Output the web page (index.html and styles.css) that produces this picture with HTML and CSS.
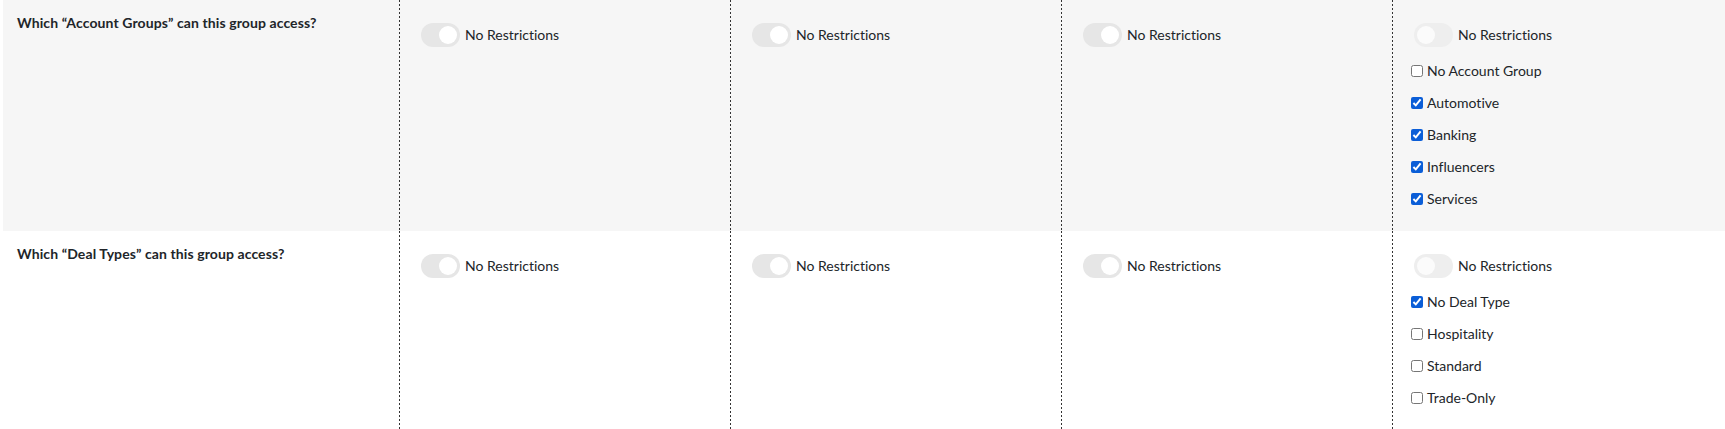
FILE: index.html
```html
<!DOCTYPE html>
<html>
<head>
<meta charset="utf-8">
<link rel="stylesheet" href="styles.css">
</head>
<body>
<div class="table">
  <div class="row shaded">
    <div class="label">Which “Account Groups” can this group access?</div>
    <div class="cell">
      <div class="toggle-line"><span class="switch on"><span class="knob"></span></span><span class="toggle-text">No Restrictions</span></div>
    </div>
    <div class="cell">
      <div class="toggle-line"><span class="switch on"><span class="knob"></span></span><span class="toggle-text">No Restrictions</span></div>
    </div>
    <div class="cell">
      <div class="toggle-line"><span class="switch on"><span class="knob"></span></span><span class="toggle-text">No Restrictions</span></div>
    </div>
    <div class="cell">
      <div class="toggle-line"><span class="switch off"><span class="knob"></span></span><span class="toggle-text">No Restrictions</span></div>
      <ul class="options">
        <li><label><input type="checkbox"> No Account Group</label></li>
        <li><label><input type="checkbox" checked> Automotive</label></li>
        <li><label><input type="checkbox" checked> Banking</label></li>
        <li><label><input type="checkbox" checked> Influencers</label></li>
        <li><label><input type="checkbox" checked> Services</label></li>
      </ul>
    </div>
  </div>
  <div class="row">
    <div class="label">Which “Deal Types” can this group access?</div>
    <div class="cell">
      <div class="toggle-line"><span class="switch on"><span class="knob"></span></span><span class="toggle-text">No Restrictions</span></div>
    </div>
    <div class="cell">
      <div class="toggle-line"><span class="switch on"><span class="knob"></span></span><span class="toggle-text">No Restrictions</span></div>
    </div>
    <div class="cell">
      <div class="toggle-line"><span class="switch on"><span class="knob"></span></span><span class="toggle-text">No Restrictions</span></div>
    </div>
    <div class="cell">
      <div class="toggle-line"><span class="switch off"><span class="knob"></span></span><span class="toggle-text">No Restrictions</span></div>
      <ul class="options">
        <li><label><input type="checkbox" checked> No Deal Type</label></li>
        <li><label><input type="checkbox"> Hospitality</label></li>
        <li><label><input type="checkbox"> Standard</label></li>
        <li><label><input type="checkbox"> Trade-Only</label></li>
      </ul>
    </div>
  </div>
</div>
</body>
</html>
```
FILE: styles.css
```css
* { box-sizing: border-box; }
html, body {
  margin: 0;
  padding: 0;
  background: #ffffff;
}
body {
  font-family: Lato, "Noto Sans", sans-serif;
  font-variant-ligatures: none;
  color: #212529;
  font-size: 14px;
}
.table {
  padding-left: 3px;
}
.row {
  display: grid;
  grid-template-columns: 396px 331px 331px 331px 1fr;
}
.row.shaded {
  background: #f6f6f6;
}
.label {
  font-weight: 700;
  font-size: 14px;
  letter-spacing: 0.1px;
  line-height: 20px;
  padding: 13px 0 0 14px;
}
.cell {
  background-image: linear-gradient(to bottom, #333333 0, #333333 2px, transparent 2px);
  background-size: 1px 4px;
  background-repeat: repeat-y;
  background-position: 0 0;
  padding: 23px 0 16px 19px;
}
.toggle-line {
  display: flex;
  align-items: center;
  height: 24px;
  margin-left: 3px;
}
.switch {
  display: flex;
  align-items: center;
  width: 39px;
  height: 24px;
  border-radius: 12px;
  padding: 0 3px;
  margin-right: 5px;
}
.switch.on {
  background: #e6e6e6;
  justify-content: flex-end;
}
.switch.off {
  background: #eeeeee;
  justify-content: flex-start;
}
.knob {
  width: 18px;
  height: 18px;
  border-radius: 50%;
  background: #ffffff;
}
.switch.off .knob {
  background: #fbfbfb;
}
.toggle-text {
  font-size: 14px;
  line-height: 20px;
}
.options {
  list-style: none;
  margin: 8px 0 0 0;
  padding: 0;
}
.options li {
  height: 32px;
  display: flex;
  align-items: center;
}
.options label {
  display: flex;
  align-items: center;
  font-size: 14px;
  line-height: 20px;
}
.options input {
  width: 12px;
  height: 12px;
  margin: 0 4px 0 0;
  accent-color: #0b5ed7;
}
```
